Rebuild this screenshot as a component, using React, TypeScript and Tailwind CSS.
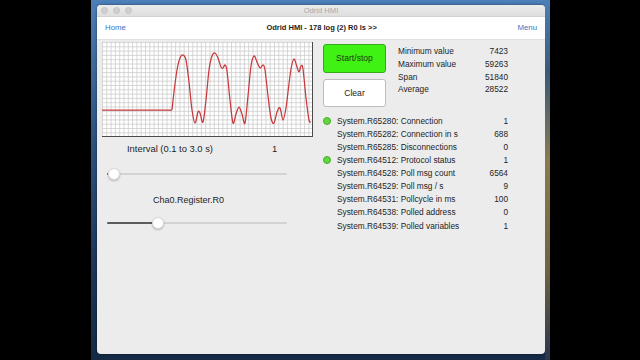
import React from "react";

type Pt = [number, number];

// chart trace in local chart coordinates (210 x 94)
const trace: Pt[] = [
  [70, 68], [72, 50], [75, 28], [78, 16], [81, 13], [84, 18], [87, 40], [90, 68], [93, 81],
  [96, 70], [98, 71], [101, 80], [104, 58], [107, 28], [110, 14], [113, 11], [116, 16],
  [119, 25], [121, 26], [123, 23], [125, 29], [128, 58], [131, 81], [134, 72], [137, 65],
  [140, 72], [143, 81], [146, 54], [149, 24], [152, 14], [155, 20], [158, 26], [161, 23],
  [163, 28], [166, 54], [169, 76], [172, 81], [175, 70], [178, 66], [181, 78], [184, 66],
  [186, 50], [189, 27], [192, 17], [195, 25], [197, 30], [199, 24], [201, 27], [204, 56],
  [207, 78], [209, 80],
];

function smoothPath(pts: Pt[]) {
  let d = `M${pts[0][0]},${pts[0][1]}`;
  for (let i = 0; i < pts.length - 1; i++) {
    const p0 = pts[i - 1] || pts[i];
    const p1 = pts[i];
    const p2 = pts[i + 1];
    const p3 = pts[i + 2] || p2;
    const c1x = p1[0] + (p2[0] - p0[0]) / 6;
    const c1y = p1[1] + (p2[1] - p0[1]) / 6;
    const c2x = p2[0] - (p3[0] - p1[0]) / 6;
    const c2y = p2[1] - (p3[1] - p1[1]) / 6;
    d += ` C${c1x.toFixed(2)},${c1y.toFixed(2)} ${c2x.toFixed(2)},${c2y.toFixed(2)} ${p2[0]},${p2[1]}`;
  }
  return d;
}

function Chart() {
  const w = 210;
  const h = 94;
  const step = 4.3;
  const vlines = Array.from({ length: Math.floor(w / step) + 1 }, (_, i) => i * step);
  const hlines = Array.from({ length: Math.floor(h / step) + 1 }, (_, i) => i * step);
  return (
    <svg width={w + 1} height={h + 1} viewBox={`0 0 ${w + 1} ${h + 1}`} className="block">
      <rect x={0} y={0} width={w} height={h} fill="#ffffff" />
      {vlines.map((x, i) => (
        <line key={"v" + i} x1={x + 0.5} y1={0} x2={x + 0.5} y2={h} stroke="#cdcdcd" strokeWidth={0.8} />
      ))}
      {hlines.map((y, i) => (
        <line key={"h" + i} x1={0} y1={y + 0.5} x2={w} y2={y + 0.5} stroke="#cdcdcd" strokeWidth={0.8} />
      ))}
      <line x1={w + 0.5} y1={0} x2={w + 0.5} y2={h + 1} stroke="#4a4a4a" strokeWidth={1} />
      <line x1={0} y1={h + 0.5} x2={w + 1} y2={h + 0.5} stroke="#4a4a4a" strokeWidth={1} />
      <path d={`M0,68 L70,68`} stroke="#c7383c" strokeWidth={1.25} fill="none" />
      <path d={smoothPath(trace)} stroke="#c7383c" strokeWidth={1.25} fill="none" strokeLinejoin="round" />
    </svg>
  );
}

function Slider({ pos }: { pos: number }) {
  return (
    <div className="relative w-[180px] h-[14px] ml-[5px]">
      <div className="absolute left-0 right-0 top-[6px] h-[1.5px] bg-[#d3d3d3] rounded-full" />
      <div className="absolute left-0 top-[6px] h-[1.5px] bg-[#5c5c5c] rounded-full" style={{ width: pos }} />
      <div
        className="absolute top-[1px] w-[12px] h-[12px] rounded-full bg-white border border-[#dadada] shadow-[0_1px_2px_rgba(0,0,0,0.25)]"
        style={{ left: pos - 6 }}
      />
    </div>
  );
}

const stats = [
  ["Minimum value", "7423"],
  ["Maximum value", "59263"],
  ["Span", "51840"],
  ["Average", "28522"],
];

const registers = [
  { label: "System.R65280: Connection", value: "1", dot: true },
  { label: "System.R65282: Connection in s", value: "688", dot: false },
  { label: "System.R65285: Disconnections", value: "0", dot: false },
  { label: "System.R64512: Protocol status", value: "1", dot: true },
  { label: "System.R64528: Poll msg count", value: "6564", dot: false },
  { label: "System.R64529: Poll msg / s", value: "9", dot: false },
  { label: "System.R64531: Pollcycle in ms", value: "100", dot: false },
  { label: "System.R64538: Polled address", value: "0", dot: false },
  { label: "System.R64539: Polled variables", value: "1", dot: false },
];

export default function App() {
  return (
    <div className="w-[640px] h-[360px] bg-black overflow-hidden [font-family:'Liberation_Sans',Arial,sans-serif] text-[#1e1e1e]">
      <div className="ml-[91px] w-[459px] h-[360px] flex bg-[linear-gradient(180deg,#4d7fb8_0%,#2f5685_35%,#1c3558_75%,#142a45_100%)]">
        <div className="w-[6px]" />
        <div className="w-[448px] flex flex-col">
          <div className="h-[5px]" />

          {/* window */}
          <div className="h-[349px] rounded-[4px] overflow-hidden bg-[#ececec] flex flex-col shadow-[0_0_3px_rgba(0,0,0,0.5)]">
            {/* title bar */}
            <div className="relative h-[12px] bg-[linear-gradient(180deg,#ececec,#dedede)] border-b border-[#d2d2d2] flex items-center">
              <div className="flex gap-[5px] pl-[4px]">
                <span className="w-[7px] h-[7px] rounded-full bg-[#d0d0d0] border border-[#c2c2c2]" />
                <span className="w-[7px] h-[7px] rounded-full bg-[#d0d0d0] border border-[#c2c2c2]" />
                <span className="w-[7px] h-[7px] rounded-full bg-[#d0d0d0] border border-[#c2c2c2]" />
              </div>
              <div className="absolute inset-0 flex items-center justify-center text-[7.6px] text-[#a9a9a9]">
                Odrid HMI
              </div>
            </div>

            {/* nav bar */}
            <div className="h-[23px] bg-white border-b border-[#e0e0e0] flex items-center justify-between px-[8px] text-[7.8px]">
              <span className="text-[#3b72c4]">Home</span>
              <span className="font-bold text-[7.5px] text-[#222]">Odrid HMI - 178 log (2) R0 ls &gt;&gt;</span>
              <span className="text-[#3b72c4]">Menu</span>
            </div>

            {/* content */}
            <div className="flex pl-[5px]">
              <div className="w-[211px] flex flex-col">
                <div className="mt-[2px]">
                  <Chart />
                </div>
                <div className="h-[24px] flex items-center text-[9.4px] pl-[25px]">
                  <span className="w-[145px]">Interval (0.1 to 3.0 s)</span>
                  <span>1</span>
                </div>
                <div className="h-[26px] flex items-center">
                  <Slider pos={7} />
                </div>
                <div className="h-[28px] flex items-center text-[9px] pl-[51px]">Cha0.Register.R0</div>
                <div className="h-[16px] flex items-center">
                  <Slider pos={51} />
                </div>
              </div>

              <div className="ml-[10px] w-[185px] flex flex-col pt-[4px] text-[8.3px]">
                <div className="flex">
                  <div className="w-[63px] flex flex-col gap-[6px]">
                    <button className="h-[29px] rounded-[3px] bg-[#3ff214] border border-[#36a81c] text-[#1f3d12] text-[8.6px]">
                      Start/stop
                    </button>
                    <button className="h-[28px] rounded-[3px] bg-white border border-[#bdbdbd] text-[#222] text-[8.6px]">
                      Clear
                    </button>
                  </div>
                  <div className="ml-[12px] flex-1 flex flex-col pt-[1px]">
                    {stats.map(([k, v]) => (
                      <div key={k} className="h-[12.7px] flex items-center justify-between">
                        <span>{k}</span>
                        <span>{v}</span>
                      </div>
                    ))}
                  </div>
                </div>

                <div className="mt-[7.5px] flex flex-col">
                  {registers.map((r) => (
                    <div key={r.label} className="h-[13.1px] flex items-center">
                      <span className="w-[8px] h-[8px] mr-[6px] flex-shrink-0">
                        {r.dot && (
                          <span className="block w-[8px] h-[8px] rounded-full bg-[#62d63c] border border-[#46b02a]" />
                        )}
                      </span>
                      <span className="flex-1">{r.label}</span>
                      <span>{r.value}</span>
                    </div>
                  ))}
                </div>
              </div>
            </div>
          </div>

          <div className="flex-1" />
        </div>
        <div className="w-[5px] bg-[linear-gradient(180deg,#4d7fb8_0%,#3a5a78_20%,#8a7a4e_45%,#6e6240_75%,#2b3550_100%)]" />
      </div>
    </div>
  );
}
